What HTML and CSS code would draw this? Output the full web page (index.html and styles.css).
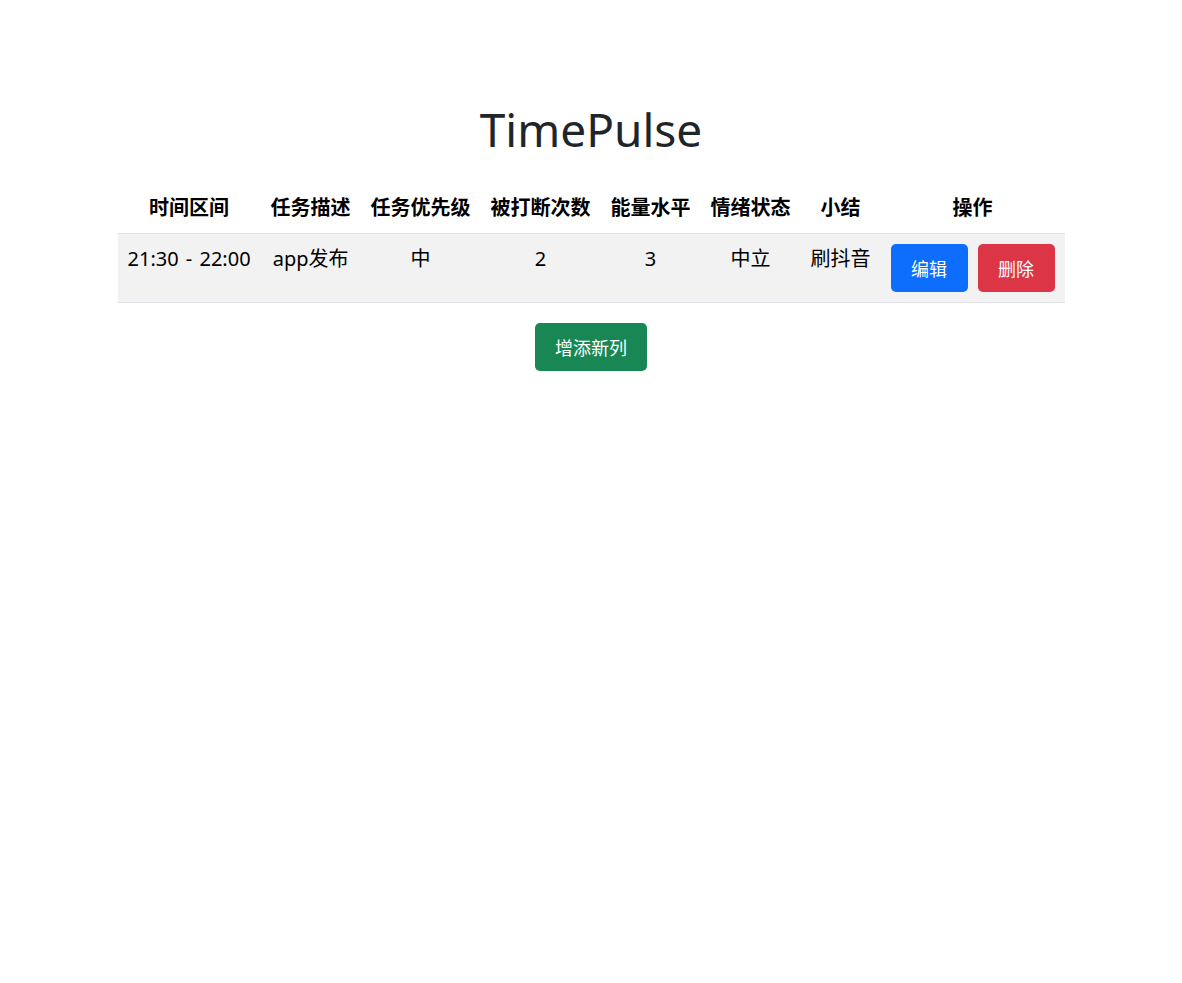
FILE: index.html
```html
<!DOCTYPE html>
<html lang="zh">
<head>
<meta charset="utf-8">
<title>TimePulse</title>
<link rel="stylesheet" href="styles.css">
</head>
<body>
<div class="container">
  <h1 class="title">TimePulse</h1>
  <table class="tasks">
    <thead>
      <tr>
        <th>时间区间</th>
        <th>任务描述</th>
        <th>任务优先级</th>
        <th>被打断次数</th>
        <th>能量水平</th>
        <th>情绪状态</th>
        <th>小结</th>
        <th>操作</th>
      </tr>
    </thead>
    <tbody>
      <tr>
        <td class="time">21:30 - 22:00</td>
        <td>app发布</td>
        <td>中</td>
        <td>2</td>
        <td>3</td>
        <td>中立</td>
        <td>刷抖音</td>
        <td><div class="actions"><button class="btn btn-edit">编辑</button><button class="btn btn-delete">删除</button></div></td>
      </tr>
    </tbody>
  </table>
  <div class="add-row">
    <button class="btn btn-add">增添新列</button>
  </div>
</div>
</body>
</html>
```

FILE: styles.css
```css
* { box-sizing: border-box; }
html, body {
  margin: 0;
  padding: 0;
  background: #fff;
}
body {
  font-family: "Noto Sans", "Noto Sans CJK SC", sans-serif;
  color: #000;
}
.container {
  width: 947px;
  margin: 0 auto;
  padding-top: 102px;
}
.title {
  margin: 0 0 26px;
  text-align: center;
  font-size: 46px;
  font-weight: 400;
  line-height: 1.2;
  color: #212529;
}
.tasks {
  width: 947px;
  border-collapse: collapse;
  font-size: 20px;
  line-height: 30px;
}
.tasks th,
.tasks td {
  padding: 10px;
  text-align: center;
  vertical-align: top;
  white-space: nowrap;
}
.tasks th {
  font-weight: 700;
  border-bottom: 1px solid #dee2e6;
}
.tasks tbody tr {
  background: #f2f2f2;
}
.tasks td {
  border-bottom: 1px solid #dee2e6;
}
.tasks .time {
  word-spacing: 2px;
}
.actions {
  display: flex;
  gap: 10px;
  justify-content: center;
}
.btn {
  font-family: "Noto Sans CJK SC", sans-serif;
  font-size: 18px;
  line-height: 28px;
  padding: 10px 0;
  height: 48px;
  border: 0;
  border-radius: 5px;
  color: #fff;
  cursor: pointer;
}
.btn-edit { background: #0d6efd; width: 77px; }
.btn-delete { background: #dc3545; width: 77px; }
.btn-add { background: #198754; width: 112px; }
.add-row {
  display: flex;
  justify-content: center;
  margin-top: 20px;
}
```
